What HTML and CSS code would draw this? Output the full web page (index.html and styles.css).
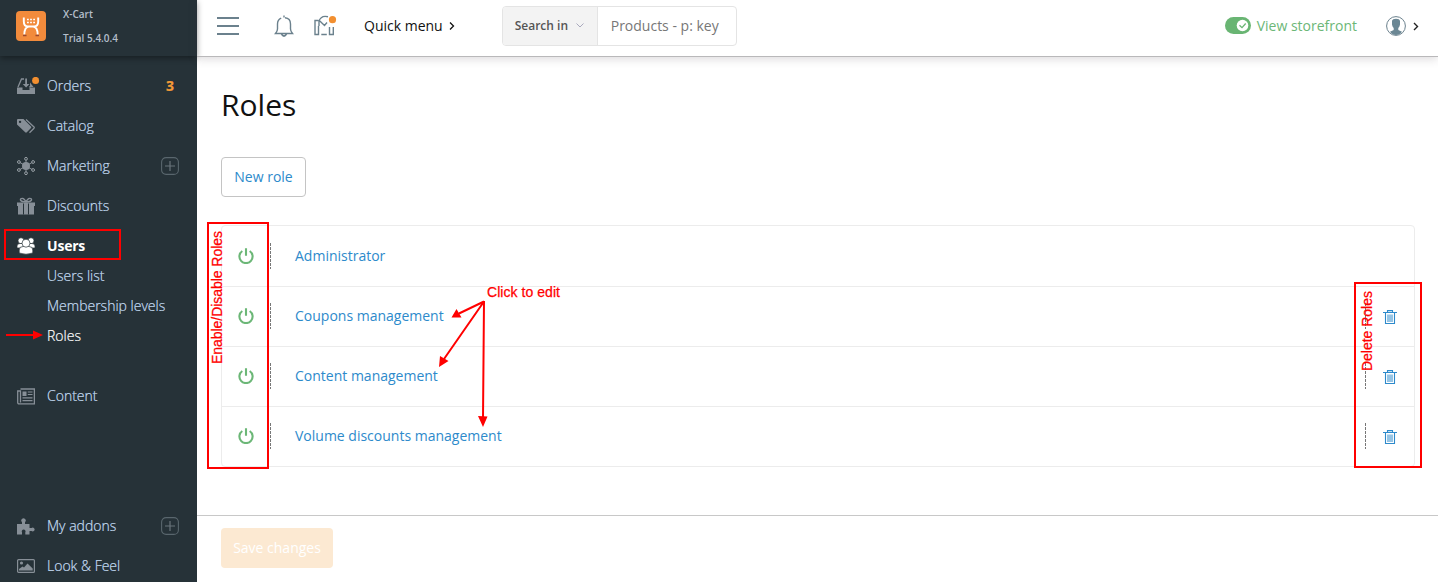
FILE: index.html
```html
<!DOCTYPE html>
<html lang="en">
<head>
<meta charset="utf-8">
<title>Roles</title>
<link rel="stylesheet" href="styles.css">
</head>
<body>
<svg class="defs" width="0" height="0">
  <symbol id="power" viewBox="0 0 16 16"><path d="M4.300 3A6.600 6.600 0 1 0 11.700 3M8 0.200V7.800" fill="none" stroke="#6cb777" stroke-width="2.100"/></symbol>
  <symbol id="trash" viewBox="0 0 14 15"><path d="M0 2.500H14M4.500 2V.6H9.500V2M2.500 3V13.500H11.500V3" fill="none" stroke="#2d8acb" stroke-width="1.100"/><path d="M5 4.500V12M7 4.500V12M9 4.500V12" stroke="#2d8acb" stroke-width="1"/></symbol>
  <symbol id="plus" viewBox="0 0 18 18"><rect x=".6" y=".6" width="16.800" height="16.800" rx="4.500" fill="none" stroke="#59666d" stroke-width="1.100"/><path d="M4 9H14M9 4V14" stroke="#69747b" stroke-width="1.200"/></symbol>
</svg>
<div class="app">
  <aside class="sidebar">
    <div class="brand">
      <svg class="logo" width="30" height="30" viewBox="0 0 30 30"><rect width="30" height="30" rx="4" fill="#f28b3c"/><path d="M7.800 6.500V10.500Q7.800 15.500 12 15.500H18Q22.200 15.500 22.200 10.500V6.500M8.300 23.500Q8.600 16 12.500 15.800M21.700 23.500Q21.400 16 17.500 15.800" fill="none" stroke="#fff" stroke-width="1.900"/><path d="M11 8.500H19M11 11.500H19" stroke="#fff" stroke-width="1.700" stroke-dasharray="1.800 1.300"/><path d="M7 24.500H10.500M19.500 24.500H23" stroke="#9c492e" stroke-width="1.300"/></svg>
      <div class="brand-text"><span>X-Cart</span><span>Trial 5.4.0.4</span></div>
    </div>
    <nav class="menu">
      <a class="item"><svg width="23" height="18" viewBox="0 0 23 18" fill="#878f97"><path d="M0 10.500H5.500V13H12.500V10.500H18V17H0Z"/><path d="M1 10L4.500 2H7M13 10.500V9" fill="none" stroke="#878f97" stroke-width="1.300"/><path d="M8.200 1.500H10V7H12.500L9.100 10.500 5.700 7H8.200Z"/><path d="M13 5.500L16.500 10H13Z"/><circle cx="18.600" cy="3.400" r="3.500" fill="#f28f30"/></svg><span>Orders</span><b class="count">3</b></a>
      <a class="item"><svg width="18" height="16" viewBox="0 0 18 16"><path fill-rule="evenodd" fill="#878f97" d="M0 2Q0 1 1 1H6.500L14 8.500Q14.700 9.200 14 10L9.800 14.300Q9 15 8.200 14.300L0 6.500ZM3 2.700A1.200 1.200 0 1 0 3.100 5.100 1.200 1.200 0 0 0 3 2.700"/><path d="M9 1.500L17 9Q17.500 9.600 17 10.200L12.500 14.700" fill="none" stroke="#878f97" stroke-width="1.300"/></svg><span>Catalog</span></a>
      <a class="item"><svg width="18" height="18" viewBox="0 0 18 18"><path d="M9 2V16M2 5L16 13M2 13L16 5" stroke="#878f97" stroke-width="1"/><circle cx="9" cy="9" r="4" fill="#878f97"/><g fill="#263238" stroke="#9aa2a8" stroke-width="1"><circle cx="9" cy="1.800" r="1.400"/><circle cx="9" cy="16.200" r="1.400"/><circle cx="1.900" cy="5" r="1.400"/><circle cx="16.100" cy="5" r="1.400"/><circle cx="1.900" cy="13" r="1.400"/><circle cx="16.100" cy="13" r="1.400"/></g></svg><span>Marketing</span><svg class="expand" width="18" height="18"><use href="#plus"/></svg></a>
      <a class="item"><svg width="18" height="18" viewBox="0 0 18 18"><path fill="#878f97" d="M0 5.500H18V9H0ZM1 9H17V17.500H1Z"/><path d="M6.500 6.500V17.500M11.500 6.500V17.500" stroke="#263238"/><path d="M9 5C7 0 3 1 3.500 3S7 4.500 9 5C11 0 15 1 14.500 3S11 4.500 9 5" fill="none" stroke="#878f97" stroke-width="1.400"/></svg><span>Discounts</span></a>
      <a class="item active"><svg width="18" height="18" viewBox="0 0 18 18"><g fill="#fff" stroke="#263238" stroke-width=".7"><circle cx="4" cy="3.700" r="3"/><circle cx="14" cy="3.700" r="3"/><path d="M0 11V9Q0 6.500 3 6.500H15Q18 6.500 18 9V11Z"/><path d="M2.200 16V13Q2.200 9.500 6 9.500H12Q15.800 9.500 15.800 13V16Q9 18.500 2.200 16Z"/><circle cx="9" cy="6.200" r="4"/></g></svg><span>Users</span></a>
      <div class="submenu"><a>Users list</a><a>Membership levels</a><a class="current">Roles</a></div>
      <a class="item"><svg width="18" height="17" viewBox="0 0 18 17"><path d="M3.500 1H17.400V15.800H2Q.7 15.800.7 14.500V3H3.500V14.500" fill="none" stroke="#878f97" stroke-width="1.300"/><path d="M5.500 3.500H9.500V8H5.500Z" fill="#878f97"/><path d="M10.800 4H15.500M10.800 6.500H15.500M5.500 9.800H15.500M5.500 12.700H15.500" stroke="#878f97" stroke-width="1.200"/></svg><span>Content</span></a>
      <a class="item addons"><svg width="18" height="17" viewBox="0 0 18 17"><path fill="#878f97" d="M0 6H5V4.200A2.200 2.200 0 1 1 8 4.200V6H12.500V10H14.500A1.900 1.900 0 1 1 14.500 13H12.500V16.500H8.300V14.300A1.900 1.900 0 1 0 5 14.300V16.500H0Z"/></svg><span>My addons</span><svg class="expand" width="18" height="18"><use href="#plus"/></svg></a>
      <a class="item"><svg width="18" height="14" viewBox="0 0 18 14"><rect x=".6" y=".6" width="16.800" height="12.800" rx="1" fill="none" stroke="#878f97" stroke-width="1.200"/><circle cx="4.500" cy="4" r="1.600" fill="#878f97"/><path d="M2 11.500V10L5.500 7.500 7 8.500 10.500 4.500 15.700 9.500V11.500Z" fill="#878f97"/></svg><span>Look &amp; Feel</span></a>
    </nav>
  </aside>
  <main class="main">
    <header class="topbar">
      <svg class="burger" width="22" height="18"><path d="M0 1H22M0 9H22M0 17H22" stroke="#6b818d" stroke-width="2"/></svg>
      <svg class="bell" width="20" height="22" viewBox="0 0 20 22"><path d="M10 .5V2.500M11 2.700C14.500 3 16.500 5.500 16.500 9V14Q16.500 16 18.500 18.500H1.500Q3.500 16 3.500 14V9C3.500 6 5 4 7.200 3.100" fill="none" stroke="#6b818d" stroke-width="1.400"/><path d="M7.500 19Q10 23 12.500 19" fill="none" stroke="#6b818d" stroke-width="1.800"/></svg>
      <svg class="news" width="23" height="21" viewBox="0 0 23 21"><path d="M4.500 5.500H1V19.500H4.500V11M7.300 19.500H12.800M15.500 12V19.500H19.300V12M4.800 6.500C6 3 9 .5 14 1.800M4.800 5L10.500 10.500 13 7.500M5 6V11" fill="none" stroke="#6b818d" stroke-width="1.400"/><circle cx="18.500" cy="4.700" r="3.600" fill="#f28f30"/></svg>
      <span class="quick">Quick menu</span>
      <svg class="chev" width="6" height="8" viewBox="0 0 6 8"><path d="M1 .5L4.500 4 1 7.500" fill="none" stroke="#111" stroke-width="1.300"/></svg>
      <div class="search"><div class="scope"><span>Search in</span><svg width="8" height="5"><path d="M.5.5L4 4 7.500.5" fill="none" stroke="#a9a9bd"/></svg></div><div class="field">Products - p: key</div></div>
      <div class="store"><svg width="26" height="17" viewBox="0 0 26 17"><rect width="26" height="17" rx="8.500" fill="#69b573"/><circle cx="17.500" cy="8.500" r="5.800" fill="#fff"/><path d="M14.500 8.200L17 10.600 20.700 6.500" fill="none" stroke="#69b573" stroke-width="1.300"/></svg><span>View storefront</span></div>
      <svg class="avatar" width="20" height="20" viewBox="0 0 20 20"><circle cx="10" cy="10" r="9.400" fill="#fff" stroke="#6b818d" stroke-width="1"/><path fill="#6b8794" d="M6 5Q6.500 2.800 10 2.800T14 5V8.500Q13.700 10.500 12.300 12V14L16 15.700Q13.500 19 10 19T4 15.700L7.700 14V12Q6.300 10.500 6 8.500Z"/></svg>
      <svg class="chev last" width="6" height="9" viewBox="0 0 6 8"><path d="M1 .5L4.500 4 1 7.500" fill="none" stroke="#222" stroke-width="1.400"/></svg>
    </header>
    <section class="content">
      <h1>Roles</h1>
      <button class="new">New role</button>
      <div class="roles">
        <div class="row"><svg class="power"><use href="#power"/></svg><i class="split"></i><a>Administrator</a></div>
        <div class="row"><svg class="power"><use href="#power"/></svg><i class="split"></i><a>Coupons management</a><i class="split end"></i><svg class="trash"><use href="#trash"/></svg></div>
        <div class="row"><svg class="power"><use href="#power"/></svg><i class="split"></i><a>Content management</a><i class="split end"></i><svg class="trash"><use href="#trash"/></svg></div>
        <div class="row"><svg class="power"><use href="#power"/></svg><i class="split"></i><a>Volume discounts management</a><i class="split end"></i><svg class="trash"><use href="#trash"/></svg></div>
      </div>
    </section>
    <footer class="actions"><button class="save">Save changes</button></footer>
  </main>
</div>
<svg class="notes" width="1438" height="582" viewBox="0 0 1438 582">
  <g fill="none" stroke="#f00" stroke-width="2">
    <rect x="5" y="230" width="115" height="29"/>
    <rect x="208" y="223" width="60" height="245"/>
    <rect x="1355" y="283" width="66" height="184"/>
    <path d="M6 335H34M484 301.500L459 313.500M484 301.500L444 359M484 301L483 418"/>
  </g>
  <g fill="#f00">
    <path d="M33 330.500L43 335 33 339.500ZM451.500 317.500L456.500 309 461.500 317.500ZM439 367L440 356 448.500 361ZM483 427L478 416 487.500 416.500Z"/>
    <text x="487" y="297" textLength="73">Click to edit</text>
    <text transform="translate(222 364) rotate(-90)" textLength="133">Enable/Disable Roles</text>
    <text transform="translate(1372 371) rotate(-90)" textLength="80">Delete Roles</text>
  </g>
</svg>
</body>
</html>
```
FILE: styles.css
```css
* { box-sizing: border-box; }
body { margin: 0; font: 14px "Open Sans", "Noto Sans", sans-serif; overflow: hidden; color: #111; background: #fff; }
.defs { position: absolute; }
.app { display: flex; width: 1438px; height: 582px; overflow: hidden; }
.sidebar { width: 197px; flex: none; background: #263238; }
.brand { height: 56px; display: flex; padding: 11px 0 0 16px; gap: 17px; box-shadow: 0 2px 6px rgba(0,0,0,.4); }
.brand-text { display: flex; flex-direction: column; margin-top: -9px; font-size: 10px; line-height: 24px; font-weight: 600; color: #b5bfcb; }
.menu { padding-top: 10px; }
.item { display: flex; align-items: center; height: 40px; padding: 0 18px 0 17px; color: #c5dcf3; font-weight: 300; -webkit-text-stroke: .2px; }
.item > svg:first-child { flex: none; }
.item span { width: 0; white-space: nowrap; margin-left: 12px; padding-bottom: 2px; }
.item:first-child span { margin-left: 7px; }
.item .expand, .item .count { margin-left: auto; }
.item .count { margin-right: 5px; padding-bottom: 2px; color: #f49b37; font-weight: 700; }
.item.active { color: #fff; font-weight: 700; -webkit-text-stroke: 0; letter-spacing: -.2px; }
.submenu { margin: -5px 0 25px 47px; color: #c5dcf3; font-weight: 300; -webkit-text-stroke: .2px; }
.submenu a { display: block; height: 30px; line-height: 30px; }
.submenu .current { color: #fff; }
.addons { margin-top: 90px; }
.main { flex: 1; min-width: 0; display: flex; flex-direction: column; }
.topbar { height: 57px; flex: none; display: flex; align-items: center; padding: 0 19px 5px 20px; border-bottom: 1px solid #b9b8ba; box-shadow: 0 2px 9px rgba(60,50,60,.18); }
.bell { margin-left: 35px; }
.news { margin-left: 20px; }
.quick { margin-left: 27px; }
.chev { margin-left: 6px; }
.search { display: flex; width: 235px; height: 40px; margin-left: 47px; border: 1px solid #e4e4e4; border-radius: 4px; overflow: hidden; }
.scope { width: 95px; display: flex; align-items: center; gap: 8px; padding-left: 12px; background: #f3f3f3; border-right: 1px solid #e4e4e4; font-size: 12px; font-weight: 600; color: #555; white-space: nowrap; }
.field { padding-left: 13px; line-height: 38px; color: #777; }
.store { display: flex; align-items: center; gap: 6px; margin-left: auto; color: #6cb777; }
.avatar { margin-left: 29px; }
.chev.last { margin-left: 7px; margin-top: 2px; }
.content { flex: 1; padding: 28px 24px 0; }
h1 { margin: 0; height: 40px; line-height: 40px; font-size: 30px; font-weight: 400; }
.new { display: block; width: 85px; height: 40px; margin-top: 32px; padding: 0 0 2px; border: 1px solid #c4c4c4; border-radius: 4px; background: #fff; color: #2d8acb; font: inherit; }
.roles { width: 1194px; margin-top: 28px; border: 1px solid #ececec; border-radius: 4px; }
.row { display: flex; align-items: center; height: 60px; padding: 0 16px 0 16px; color: #2d8acb; }
.row + .row { border-top: 1px solid #ececec; padding-bottom: 1px; }
.power { width: 16px; height: 16px; }
.split { width: 1px; height: 26px; margin-left: 16px; background: repeating-linear-gradient(#777 0 3px, transparent 3px 4px); }
.row a { margin-left: 24px; padding-bottom: 2px; }
.split.end { margin-left: auto; }
.trash { width: 14px; height: 15px; margin: 2px 1px 0 17px; }
.actions { height: 67px; flex: none; border-top: 1px solid #c8c8c8; padding: 12px 24px; background: #fff; }
.save { width: 112px; height: 40px; padding: 0 0 2px; border: 0; border-radius: 4px; background: #fce9d2; color: #fff; font: inherit; }
.notes { position: absolute; left: 0; top: 0; pointer-events: none; font: 14px "Liberation Sans", sans-serif; }
.notes text { stroke: #f00; stroke-width: .25px; }
```
